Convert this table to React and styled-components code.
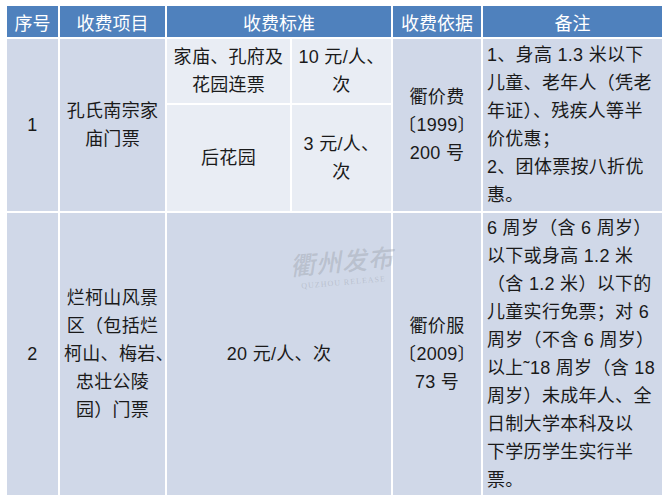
import styled, { createGlobalStyle } from "styled-components";

const GlobalStyle = createGlobalStyle`
  html, body {
    margin: 0;
    padding: 0;
    background: #ffffff;
  }
`;

const Page = styled.div`
  position: relative;
  padding: 6px 6px 0 5px;
  width: 668px;
  box-sizing: border-box;
  font-family: "Liberation Sans", "Noto Sans CJK SC", sans-serif;
`;

const Table = styled.table`
  border-collapse: collapse;
  table-layout: fixed;
  width: 657px;
`;

const Cell = styled.td`
  border: 2px solid #ffffff;
  padding: 0 4px;
  text-align: ${(p) => (p.$left ? "left" : "center")};
  vertical-align: middle;
  background: ${(p) => (p.$light ? "#e9edf4" : "#d0d8e8")};
  color: #1a1a1a;
  font-size: 18px;
  line-height: 28px;
  letter-spacing: 0.3px;
  white-space: nowrap;
`;

const Head = styled.th`
  border: 2px solid #ffffff;
  border-top: none;
  background: #4f81bd;
  color: #ffffff;
  font-weight: normal;
  font-size: 18px;
  height: 31px;
  padding: 0;
`;

const Row = styled.tr`
  height: ${(p) => p.$h}px;
`;

const Watermark = styled.div`
  position: absolute;
  left: 290px;
  top: 242px;
  display: flex;
  flex-direction: column;
  align-items: center;
  color: rgba(150, 155, 165, 0.4);
  pointer-events: none;
  transform: rotate(-5deg);
`;

const MarkTitle = styled.span`
  font-family: "Noto Sans CJK SC", sans-serif;
  font-size: 25px;
  font-weight: 500;
  font-style: italic;
  letter-spacing: 1px;
`;

const MarkSub = styled.span`
  font-family: "Liberation Serif", serif;
  font-size: 8px;
  letter-spacing: 1px;
`;

export default function App() {
  return (
    <Page>
      <GlobalStyle />
      <Table>
        <colgroup>
          <col style={{ width: 53 }} />
          <col style={{ width: 107 }} />
          <col style={{ width: 125 }} />
          <col style={{ width: 101 }} />
          <col style={{ width: 90 }} />
          <col style={{ width: 181 }} />
        </colgroup>
        <thead>
          <tr>
            <Head>序号</Head>
            <Head>收费项目</Head>
            <Head colSpan={2}>收费标准</Head>
            <Head>收费依据</Head>
            <Head>备注</Head>
          </tr>
        </thead>
        <tbody>
          <Row $h={66}>
            <Cell rowSpan={2}>1</Cell>
            <Cell rowSpan={2}>
              孔氏南宗家
              <br />
              庙门票
            </Cell>
            <Cell $light>
              家庙、孔府及
              <br />
              花园连票
            </Cell>
            <Cell $light>
              10 元/人、
              <br />次
            </Cell>
            <Cell rowSpan={2}>
              衢价费
              <br />
              〔1999〕
              <br />
              200 号
            </Cell>
            <Cell rowSpan={2} $left>
              1、身高 1.3 米以下
              <br />
              儿童、老年人（凭老
              <br />
              年证）、残疾人等半
              <br />
              价优惠；
              <br />
              2、团体票按八折优
              <br />
              惠。
            </Cell>
          </Row>
          <Row $h={108}>
            <Cell $light>后花园</Cell>
            <Cell $light>
              3 元/人、
              <br />次
            </Cell>
          </Row>
          <Row $h={284}>
            <Cell>2</Cell>
            <Cell>
              烂柯山风景
              <br />
              区（包括烂
              <br />
              柯山、梅岩、
              <br />
              忠壮公陵
              <br />
              园）门票
            </Cell>
            <Cell colSpan={2}>20 元/人、次</Cell>
            <Cell>
              衢价服
              <br />
              〔2009〕
              <br />
              73 号
            </Cell>
            <Cell $left>
              6 周岁（含 6 周岁）
              <br />
              以下或身高 1.2 米
              <br />
              （含 1.2 米）以下的
              <br />
              儿童实行免票；对 6
              <br />
              周岁（不含 6 周岁）
              <br />
              以上˜18 周岁（含 18
              <br />
              周岁）未成年人、全
              <br />
              日制大学本科及以
              <br />
              下学历学生实行半
              <br />
              票。
            </Cell>
          </Row>
        </tbody>
      </Table>
      <Watermark>
        <MarkTitle>衢州发布</MarkTitle>
        <MarkSub>QUZHOU RELEASE</MarkSub>
      </Watermark>
    </Page>
  );
}
